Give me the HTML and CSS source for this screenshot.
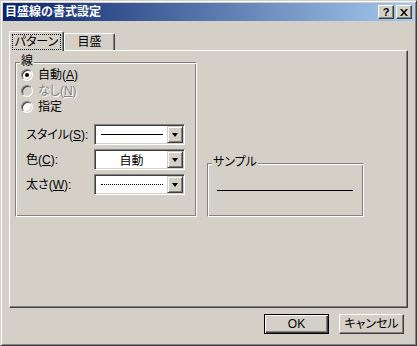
FILE: index.html
```html
<!DOCTYPE html>
<html lang="ja">
<head>
    <meta charset="UTF-8">
    <title>目盛線の書式設定</title>
    <link rel="stylesheet" href="styles.css">
</head>
<body>
<div class="window">
    <div class="titlebar">
        <span class="title">目盛線の書式設定</span>
        <span class="tbtn help">?</span>
        <span class="tbtn close">
            <svg width="8" height="7" viewBox="0 0 8 7"><path d="M0 0h2l2 2.5L6 0h2L5 3.5 8 7H6L4 4.5 2 7H0l3-3.5z" fill="#000"/></svg>
        </span>
    </div>

    <div class="content">
        <div class="tabs">
            <div class="tab active"><span class="focus">パターン</span></div>
            <div class="tab">目盛</div>
        </div>

        <div class="panel">
            <div class="group line-group">
                <span class="group-title">線</span>
                <div class="radios">
                    <label class="radio-row"><span class="radio checked"></span><span>自動(<u>A</u>)</span></label>
                    <label class="radio-row disabled"><span class="radio"></span><span>なし(<u>N</u>)</span></label>
                    <label class="radio-row"><span class="radio"></span><span>指定</span></label>
                </div>
                <div class="fields">
                    <div class="field">
                        <span class="field-label">スタイル(<u>S</u>):</span>
                        <div class="combo">
                            <div class="combo-value"><span class="solid-line"></span></div>
                            <span class="drop"><span class="arrow"></span></span>
                        </div>
                    </div>
                    <div class="field">
                        <span class="field-label">色(<u>C</u>):</span>
                        <div class="combo">
                            <div class="combo-value text">自動</div>
                            <span class="drop"><span class="arrow"></span></span>
                        </div>
                    </div>
                    <div class="field">
                        <span class="field-label">太さ(<u>W</u>):</span>
                        <div class="combo">
                            <div class="combo-value"><span class="dotted-line"></span></div>
                            <span class="drop"><span class="arrow"></span></span>
                        </div>
                    </div>
                </div>
            </div>

            <div class="group sample-group">
                <span class="group-title">サンプル</span>
                <span class="sample-line"></span>
            </div>
        </div>

        <div class="buttons">
            <button class="btn default">OK</button>
            <button class="btn">キャンセル</button>
        </div>
    </div>
</div>
</body>
</html>
```

FILE: styles.css
```css
body {
    margin: 0;
    font-family: "Liberation Sans", "Noto Sans CJK JP", sans-serif;
    font-size: 12px;
    font-feature-settings: "palt";
    color: #000;
    background: #d4d0c8;
}
.window {
    width: 417px;
    height: 346px;
    box-sizing: border-box;
    background: #d4d0c8;
    border: 1px solid;
    border-color: #d4d0c8 #404040 #404040 #d4d0c8;
    box-shadow: inset 1px 1px #fff, inset -1px -1px #808080;
    padding: 2px;
}
.titlebar {
    height: 18px;
    display: flex;
    align-items: center;
    gap: 2px;
    padding: 0 2px 0 2px;
    background: linear-gradient(to right, #0a246a, #a6caf0);
}
.title {
    color: #fff;
    font-weight: bold;
    font-size: 12px;
    line-height: 18px;
    font-feature-settings: normal;
}
.tbtn {
    width: 16px;
    height: 14px;
    box-sizing: border-box;
    display: flex;
    align-items: center;
    justify-content: center;
    background: #d4d0c8;
    border: 1px solid;
    border-color: #fff #404040 #404040 #fff;
    box-shadow: inset -1px -1px #808080;
    font-weight: bold;
    font-size: 11px;
    line-height: 12px;
}
.help {
    margin-left: auto;
}
.content {
    padding: 10px 6px 0 6px;
}
.tabs {
    display: flex;
    align-items: flex-end;
    height: 19px;
}
.tab {
    box-sizing: border-box;
    width: 51px;
    height: 17px;
    background: #d4d0c8;
    border-top: 1px solid #fff;
    border-left: 1px solid #fff;
    border-right: 1px solid #404040;
    box-shadow: inset -1px 0 #808080;
    border-radius: 2px 2px 0 0;
    text-align: center;
    line-height: 16px;
}
.tab.active {
    position: relative;
    z-index: 1;
    width: 55px;
    height: 20px;
    margin-bottom: -1px;
    padding-top: 2px;
}
.focus {
    display: inline-block;
    outline: 1px dotted #000;
    padding: 0 2px;
    line-height: 14px;
}
.panel {
    box-sizing: border-box;
    height: 258px;
    border: 1px solid;
    border-color: #fff #404040 #404040 #fff;
    box-shadow: inset -1px -1px #808080;
    padding: 11px 0 0 5px;
    display: flex;
    align-items: flex-start;
}
.group {
    position: relative;
    box-sizing: border-box;
    border: 1px solid;
    border-color: #808080 #fff #fff #808080;
    box-shadow: inset 1px 1px #fff, inset -1px -1px #808080;
}
.group-title {
    position: absolute;
    top: -9px;
    left: 4px;
    padding: 0 1px;
    background: #d4d0c8;
    line-height: 14px;
}
.line-group {
    width: 182px;
    height: 155px;
    padding: 4px 0 0 5px;
}
.radio-row {
    display: flex;
    align-items: center;
    gap: 5px;
    height: 16px;
    line-height: 16px;
}
.radio {
    width: 12px;
    height: 12px;
    box-sizing: border-box;
    border-radius: 50%;
    background: #fff;
    border: 1px solid;
    border-color: #808080 #fff #fff #808080;
    box-shadow: inset 1px 1px #404040, inset -1px -1px #d4d0c8;
    display: flex;
    align-items: center;
    justify-content: center;
}
.radio.checked::after {
    content: "";
    width: 4px;
    height: 4px;
    border-radius: 50%;
    background: #000;
}
.radio-row.disabled {
    color: #808080;
    text-shadow: 1px 1px #fff;
}
.radio-row.disabled .radio {
    background: #d4d0c8;
}
.fields {
    display: flex;
    flex-direction: column;
    gap: 4px;
    margin-top: 9px;
    padding-left: 5px;
}
.field {
    display: flex;
    align-items: center;
}
.field-label {
    width: 68px;
    line-height: 14px;
}
.combo {
    box-sizing: border-box;
    width: 91px;
    height: 21px;
    display: flex;
    background: #fff;
    border: 1px solid;
    border-color: #808080 #fff #fff #808080;
    box-shadow: inset 1px 1px #404040, inset -1px -1px #d4d0c8;
    padding: 1px;
}
.combo-value {
    flex: 1;
    display: flex;
    align-items: center;
    padding-left: 5px;
}
.combo-value.text {
    justify-content: center;
    padding-left: 0;
}
.solid-line {
    width: 62px;
    border-top: 1px solid #000;
}
.dotted-line {
    width: 62px;
    border-top: 1px dotted #000;
}
.drop {
    box-sizing: border-box;
    width: 16px;
    height: 17px;
    display: flex;
    align-items: center;
    justify-content: center;
    background: #d4d0c8;
    border: 1px solid;
    border-color: #d4d0c8 #404040 #404040 #d4d0c8;
    box-shadow: inset 1px 1px #fff, inset -1px -1px #808080;
}
.arrow {
    width: 0;
    height: 0;
    border-left: 3.5px solid transparent;
    border-right: 3.5px solid transparent;
    border-top: 4px solid #000;
    margin-top: 1px;
}
.sample-group {
    width: 157px;
    height: 54px;
    margin-left: 10px;
    margin-top: 101px;
    padding: 26px 0 0 9px;
}
.sample-line {
    display: block;
    width: 136px;
    border-top: 1px solid #000;
}
.buttons {
    display: flex;
    justify-content: flex-end;
    gap: 10px;
    margin-top: 6px;
    padding-right: 4px;
}
.btn {
    box-sizing: border-box;
    width: 65px;
    height: 20px;
    padding: 0;
    font-family: inherit;
    font-size: 12px;
    font-feature-settings: "palt";
    line-height: 14px;
    color: #000;
    background: #d4d0c8;
    border: 1px solid;
    border-color: #fff #404040 #404040 #fff;
    box-shadow: inset -1px -1px #808080;
}
.btn.default {
    border-color: #000;
    box-shadow: inset 1px 1px #fff, inset -1px -1px #404040, inset -2px -2px #808080;
}
```
